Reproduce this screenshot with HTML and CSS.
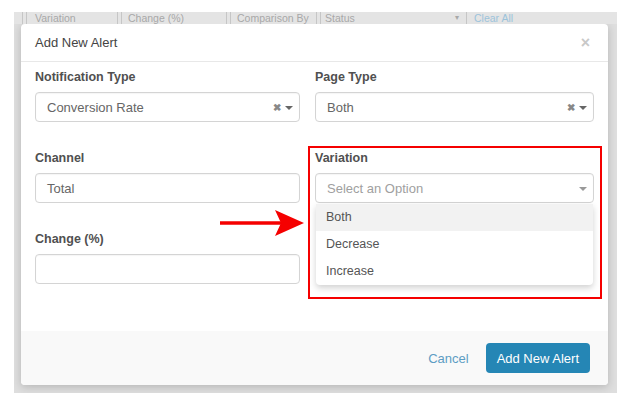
FILE: index.html
```html
<!DOCTYPE html>
<html>
<head>
<meta charset="utf-8">
<link rel="stylesheet" href="styles.css">
</head>
<body>
<div class="shot">
  <div class="bg-head">
    <span class="sep s1"></span><span class="bh h1">Variation</span>
    <span class="sep s2"></span><span class="bh h2">Change (%)</span>
    <span class="sep s3"></span><span class="bh h3">Comparison By</span>
    <span class="sep s4"></span><span class="bh h4">Status</span>
    <span class="bh caret-bg">&#9662;</span>
    <span class="sep s5"></span><span class="bh h5">Clear All</span>
  </div>
  <div class="modal">
    <div class="modal-header">
      <span class="title">Add New Alert</span>
      <span class="close">&times;</span>
    </div>
    <div class="modal-body">
      <div class="field">
        <label class="lbl">Notification Type</label>
        <div class="select"><span class="val">Conversion Rate</span><span class="ctrl"><span class="clr">&#10006;</span><span class="caret"></span></span></div>
      </div>
      <div class="field">
        <label class="lbl">Page Type</label>
        <div class="select"><span class="val">Both</span><span class="ctrl"><span class="clr">&#10006;</span><span class="caret"></span></span></div>
      </div>
      <div class="field">
        <label class="lbl">Channel</label>
        <div class="select"><span class="val">Total</span></div>
      </div>
      <div class="field var-field">
        <label class="lbl">Variation</label>
        <div class="select open"><span class="val ph">Select an Option</span><span class="ctrl"><span class="caret light"></span></span></div>
        <ul class="dropdown">
          <li class="hl">Both</li>
          <li>Decrease</li>
          <li>Increase</li>
        </ul>
        <div class="redbox"></div>
        <svg class="arrow" width="84" height="28" viewBox="0 0 84 28"><line x1="0" y1="14" x2="62" y2="14" stroke="#f50000" stroke-width="3.5"/><polygon points="55,1 84,14 55,27 61,14" fill="#f50000"/></svg>
      </div>
      <div class="field">
        <label class="lbl">Change (%)</label>
        <div class="select"></div>
      </div>
    </div>
    <div class="modal-footer">
      <span class="cancel">Cancel</span>
      <span class="btn">Add New Alert</span>
    </div>
  </div>
</div>
</body>
</html>
```

FILE: styles.css
```css
html, body { margin: 0; padding: 0; background: #fff; }
body { font-family: "Liberation Sans", Arial, sans-serif; }

.shot {
  position: relative;
  margin: 12px 0 0 14px;
  width: 603px;
  height: 381px;
  background: #dedede;
  overflow: hidden;
}

.bg-head {
  position: relative;
  height: 12px;
  background: #e4e4e4;
}
.bh {
  position: absolute;
  top: 1px;
  font-size: 10.5px;
  line-height: 10px;
  color: #a8a8a8;
  white-space: nowrap;
}
.h1 { left: 21px; }
.h2 { left: 114px; }
.h3 { left: 223px; }
.h4 { left: 311px; }
.caret-bg { left: 441px; font-size: 8px; }
.h5 { left: 460px; color: #9cc3db; }
.sep {
  position: absolute;
  top: 0;
  width: 3px;
  height: 12px;
  border-left: 1px solid #c6c6c6;
  border-right: 1px solid #c6c6c6;
}
.s1 { left: 8px; }
.s2 { left: 103px; }
.s3 { left: 212px; }
.s4 { left: 302px; }
.s5 { left: 452px; width: 0; border-right: none; }

.modal {
  margin: 0 9px 0 7px;
  height: 361px;
  background: #fff;
  border-radius: 4px;
  box-shadow: 0 2px 8px rgba(0,0,0,0.18);
  display: flex;
  flex-direction: column;
}

.modal-header {
  height: 37px;
  border-bottom: 1px solid #e8e8e8;
  display: flex;
  align-items: center;
  justify-content: space-between;
  padding: 0 18px 0 14px;
}
.title { font-size: 13px; color: #444; }
.close { font-size: 16px; color: #c8c8c8; font-weight: bold; }

.modal-body {
  flex: 1;
  padding: 9px 14px 0 14px;
  display: grid;
  grid-template-columns: 265px 279px;
  column-gap: 15px;
  row-gap: 30px;
  align-content: start;
}
.field { position: relative; display: flex; flex-direction: column; }
.lbl {
  font-size: 12.5px;
  font-weight: bold;
  color: #505050;
  height: 13px;
  line-height: 13px;
  margin-bottom: 8px;
}
.select {
  box-sizing: border-box;
  height: 30px;
  border: 1px solid #d4d4d4;
  border-radius: 4px;
  box-shadow: inset 0 1px 1px rgba(0,0,0,0.04);
  display: flex;
  align-items: center;
  justify-content: space-between;
  padding: 0 6px 0 11px;
}
.val { font-size: 13px; color: #666; }
.val.ph { color: #a0a0a0; }
.ctrl { display: flex; align-items: center; gap: 4px; }
.clr { font-size: 10px; color: #888; font-weight: bold; }
.caret {
  width: 0; height: 0;
  border-left: 4px solid transparent;
  border-right: 4px solid transparent;
  border-top: 4px solid #666;
  margin-top: 1px;
}
.caret.light { border-top-color: #999; }

.dropdown {
  position: absolute;
  left: 1px;
  right: 1px;
  top: 52px;
  margin: 0;
  padding: 0;
  list-style: none;
  background: #fff;
  border-radius: 0 0 4px 4px;
  box-shadow: 0 3px 6px rgba(0,0,0,0.18);
  z-index: 3;
}
.dropdown li {
  height: 27px;
  line-height: 27px;
  padding-left: 10px;
  font-size: 12.5px;
  color: #555;
}
.dropdown li.hl { background: #f2f2f2; }

.redbox {
  position: absolute;
  left: -7px;
  top: -6px;
  width: 290px;
  height: 149px;
  border: 2px solid #f50000;
  z-index: 4;
  pointer-events: none;
}
.arrow {
  position: absolute;
  left: -95px;
  top: 57px;
  z-index: 4;
}

.modal-footer {
  height: 54px;
  background: #f9f9f9;
  border-radius: 0 0 4px 4px;
  display: flex;
  align-items: center;
  justify-content: flex-end;
  padding-right: 18px;
  gap: 17px;
}
.cancel { font-size: 13px; color: #5d9dc4; }
.btn {
  box-sizing: border-box;
  height: 30px;
  padding: 0 11px;
  background: #2586b5;
  color: #fff;
  font-size: 13px;
  border-radius: 4px;
  display: flex;
  align-items: center;
}
```
